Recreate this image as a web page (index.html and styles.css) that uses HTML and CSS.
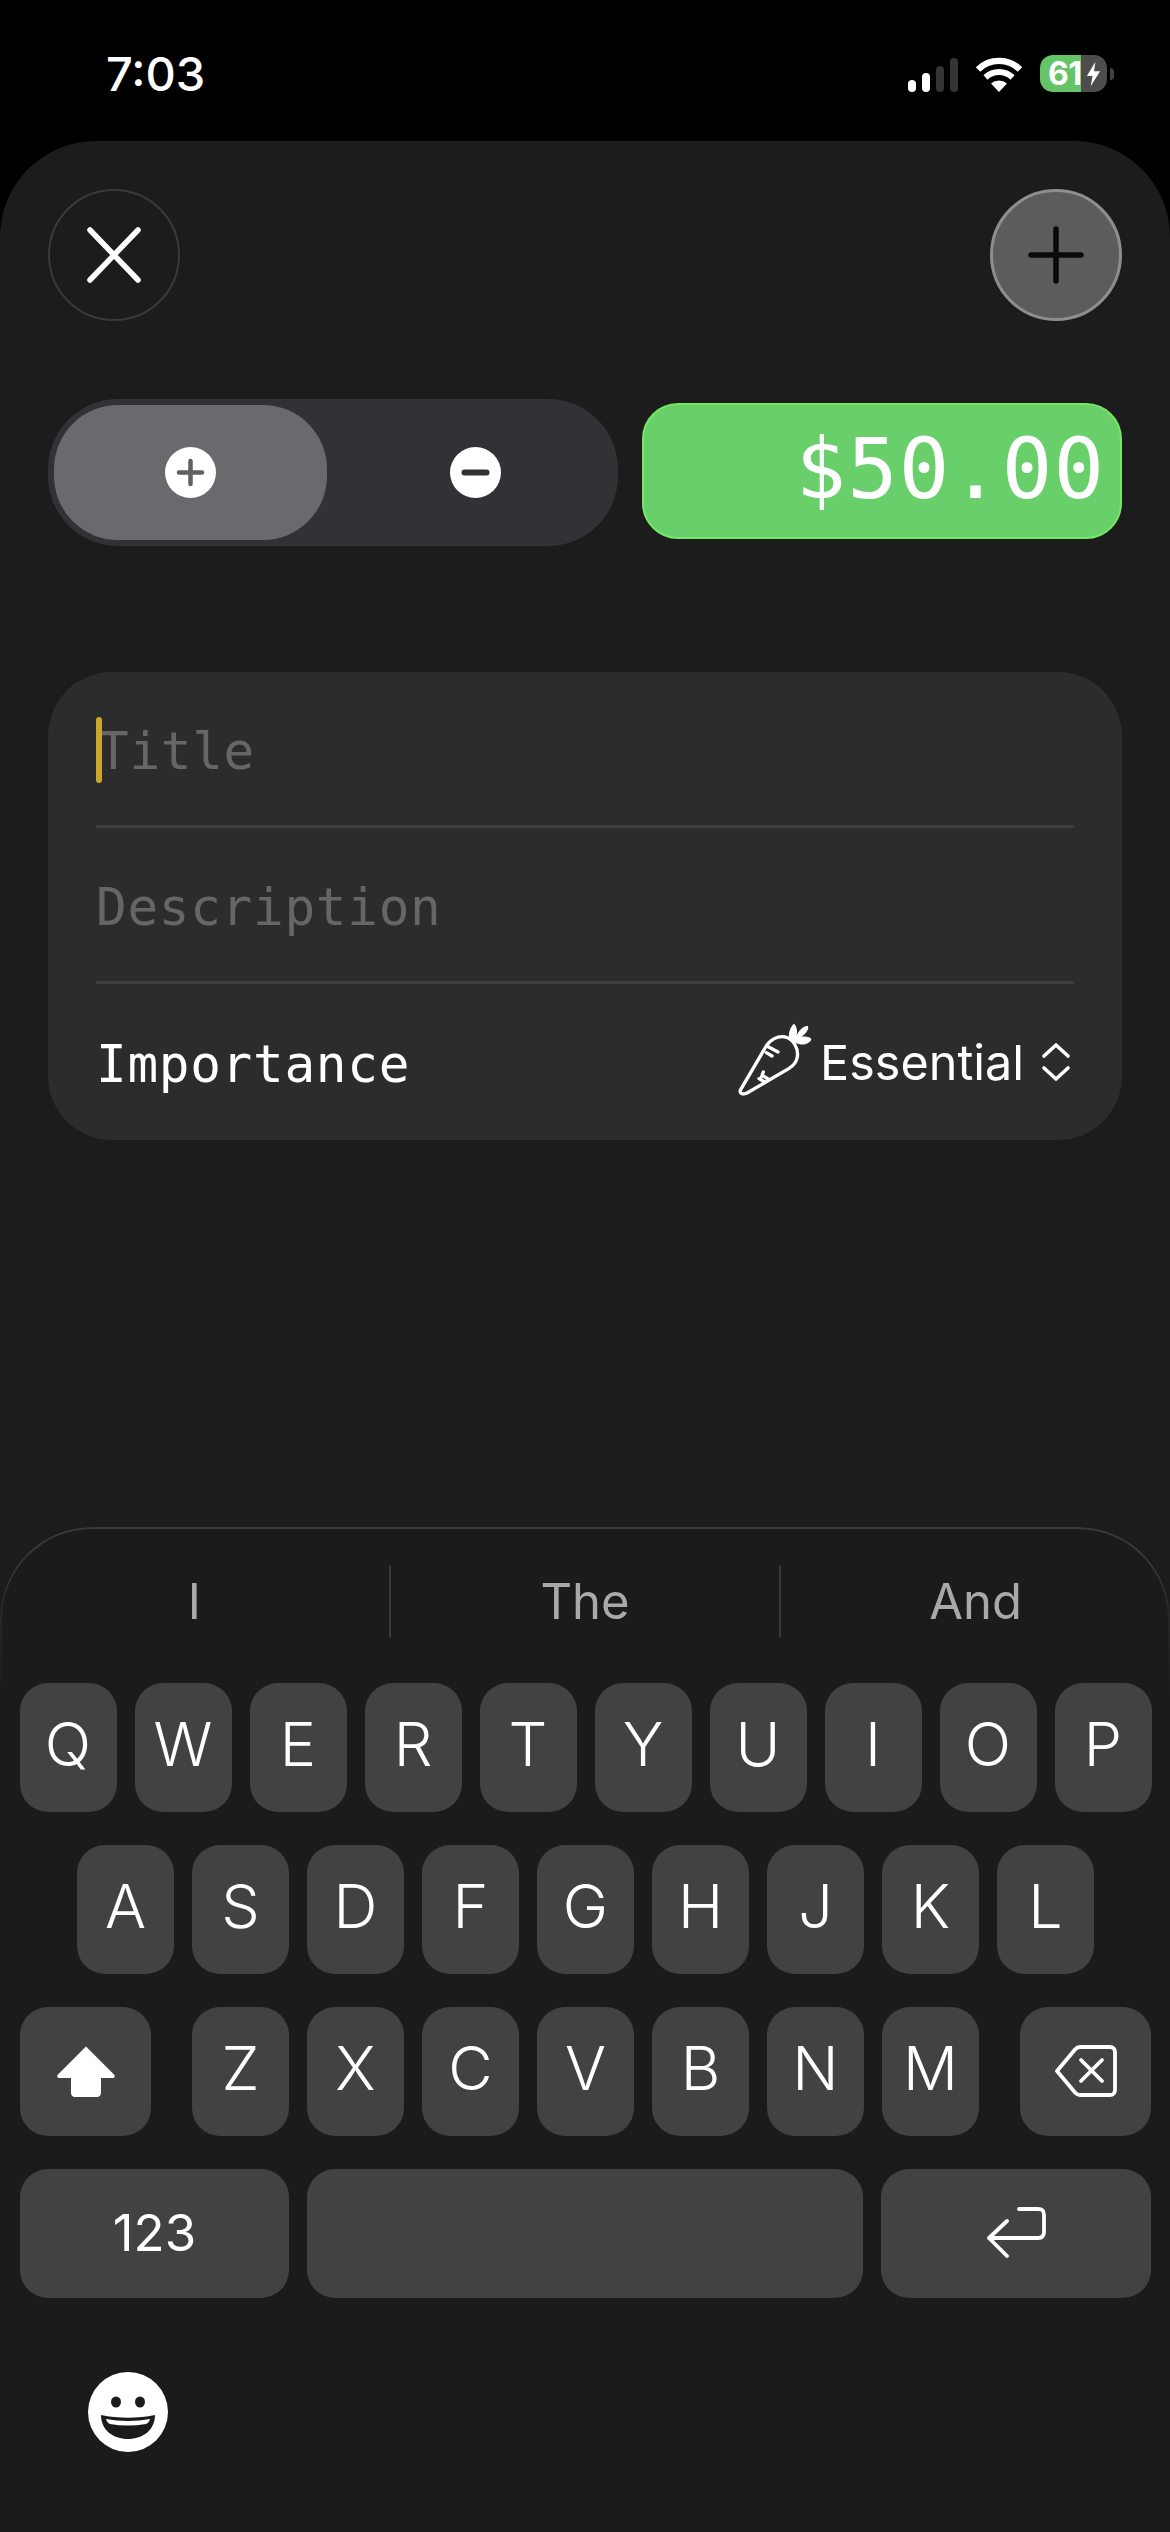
FILE: index.html
```html
<!DOCTYPE html>
<html lang="en">
<head>
<meta charset="utf-8">
<title>New transaction</title>
<link rel="stylesheet" href="styles.css">
</head>
<body>
<div class="phone">
  <header class="status">
    <span class="time">7:03</span>
    <div class="status-icons">
      <div class="signal"><i class="bar b1"></i><i class="bar b2"></i><i class="bar b3 off"></i><i class="bar b4 off"></i></div>
      <svg class="wifi" viewBox="0 0 48 36"><path d="M24 36 16 27.5a12 12 0 0 1 16 0Z" fill="#fff"/><path d="M10.5 21.5a19.5 19.5 0 0 1 27 0" fill="none" stroke="#fff" stroke-width="6"/><path d="M3 13.5a30 30 0 0 1 42 0" fill="none" stroke="#fff" stroke-width="6.4"/></svg>
      <div class="battery">
        <div class="battery-body">
          <span class="battery-num">61</span>
          <svg class="bolt" viewBox="0 0 16 26"><path d="M10 0 1 15h6l-2 11 10-16H8.500Z" fill="#fff"/></svg>
        </div>
        <i class="nub"></i>
      </div>
    </div>
  </header>

  <main class="sheet">
    <div class="form">
      <div class="top-actions">
        <button class="round close" aria-label="Close">
          <svg viewBox="0 0 60 60"><path d="M6 5 54 55M54 5 6 55" stroke="#fff" stroke-width="5.500" stroke-linecap="round"/></svg>
        </button>
        <button class="round add" aria-label="Add">
          <svg viewBox="0 0 60 60"><path d="M30 4V56M5 30H55" stroke="#0a0a0a" stroke-width="5.500" stroke-linecap="round"/></svg>
        </button>
      </div>

      <div class="amount-row">
        <div class="segment">
          <div class="seg-item active">
            <svg class="seg-icon" viewBox="0 0 51 51"><circle cx="25.500" cy="25.500" r="25.500" fill="#fff"/><path d="M25.500 14V37M14 25.500H37" stroke="#5f5f64" stroke-width="4.500" stroke-linecap="round"/></svg>
          </div>
          <div class="seg-item">
            <svg class="seg-icon" viewBox="0 0 51 51"><circle cx="25.500" cy="25.500" r="25.500" fill="#fff"/><path d="M14.500 25.500H36.500" stroke="#313136" stroke-width="6" stroke-linecap="round"/></svg>
          </div>
        </div>
        <div class="amount">$50.00</div>
      </div>

      <section class="card">
        <div class="field">
          <i class="caret"></i>
          <span class="mono placeholder title-ph">Title</span>
        </div>
        <div class="field">
          <span class="mono placeholder">Description</span>
        </div>
        <div class="field importance">
          <span class="mono">Importance</span>
          <div class="picker">
            <svg class="carrot" viewBox="120 80 225 225"><g fill="none" stroke="#fff" stroke-width="10" stroke-linecap="round" stroke-linejoin="round"><path d="M128 283 203 155C215 133 240 120 262 125 287 132 302 160 298 185 295 202 285 212 272 220L147 293C135 299 122 294 128 283Z"/><path d="M212 155 240 170M205 172 222 182M193 240 210 251M183 250 200 260M196 230 190 245"/></g><path d="M272 128C272 110 278 92 288 85 296 92 300 108 295 122 302 105 318 90 330 92 334 102 322 118 310 124 322 122 338 124 340 132 336 145 315 152 300 145 288 142 276 138 272 128Z" fill="#fff"/></svg>
            <span class="picker-label">Essential</span>
            <svg class="updown" viewBox="0 0 30 40"><path d="M3 14 15 3 27 14M3 26 15 37 27 26" fill="none" stroke="#fff" stroke-width="3.600" stroke-linecap="round" stroke-linejoin="round"/></svg>
          </div>
        </div>
      </section>
    </div>

    <section class="keyboard">
      <div class="suggestions">
        <span class="sug">I</span><span class="sug">The</span><span class="sug">And</span>
      </div>
      <div class="keys">
        <div class="row">
          <span class="key">Q</span><span class="key">W</span><span class="key">E</span><span class="key">R</span><span class="key">T</span><span class="key">Y</span><span class="key">U</span><span class="key">I</span><span class="key">O</span><span class="key">P</span>
        </div>
        <div class="row">
          <span class="key">A</span><span class="key">S</span><span class="key">D</span><span class="key">F</span><span class="key">G</span><span class="key">H</span><span class="key">J</span><span class="key">K</span><span class="key">L</span>
        </div>
        <div class="row row-split">
          <span class="key wide">
            <svg class="shift" viewBox="0 0 60 52"><path d="M30 1.500 58 29.500C59.500 31 58.500 33 57 33H45V48C45 50 43.500 52 41 52H19C16.500 52 15 50 15 48V33H3C1.500 33 .5 31 2 29.500Z" fill="#fff"/></svg>
          </span>
          <div class="group">
            <span class="key">Z</span><span class="key">X</span><span class="key">C</span><span class="key">V</span><span class="key">B</span><span class="key">N</span><span class="key">M</span>
          </div>
          <span class="key wide">
            <svg class="delete" viewBox="0 0 62 52"><path d="M2 26 20 4.500C21.500 2.800 23 2 25 2H55C58 2 60 4 60 7V45C60 48 58 50 55 50H25C23 50 21.500 49.200 20 47.500Z" fill="none" stroke="#fff" stroke-width="3.800" stroke-linejoin="round"/><path d="M26 15 47 36M47 15 26 36" stroke="#fff" stroke-width="3.800" stroke-linecap="round"/></svg>
          </span>
        </div>
        <div class="row">
          <span class="key num">123</span>
          <span class="key space"></span>
          <span class="key ret">
            <svg class="return" viewBox="0 0 60 52"><path d="M33 2H52C56.500 2 58 4 58 8V25C58 29 56 31 52 31H3M21 14 3 31 21 49" fill="none" stroke="#fff" stroke-width="3.800" stroke-linecap="round" stroke-linejoin="round"/></svg>
          </span>
        </div>
      </div>
      <svg class="emoji" viewBox="0 0 80 80"><circle cx="40" cy="40" r="40" fill="#fff"/><ellipse cx="28" cy="30" rx="5" ry="5.500" fill="#1b1b1b"/><ellipse cx="52" cy="30" rx="5" ry="5.500" fill="#1b1b1b"/><path d="M13 43C30 46.500 50 46.500 67 43 67 58 55 67 40 67 25 67 13 58 13 43Z" fill="#1b1b1b"/><path d="M18 47C32 49.500 48 49.500 62 47 61 50 60 51 58 52 46 54 34 54 22 52 20 51 19 50 18 47Z" fill="#fff"/></svg>
    </section>
  </main>
</div>
</body>
</html>
```
FILE: styles.css
```css
* { box-sizing: border-box; }
html, body { margin: 0; padding: 0; background: #000; }
.phone {
  width: 1170px;
  height: 2532px;
  overflow: hidden;
  display: flex;
  flex-direction: column;
  background: #000;
  color: #fff;
  font-family: Inter, "Liberation Sans", sans-serif;
}

/* status bar */
.status {
  flex: 0 0 141px;
  display: flex;
  justify-content: space-between;
  align-items: flex-start;
  padding: 0 56px 0 106px;
}
.time {
  font-size: 47px;
  font-weight: 500;
  line-height: 56px;
  margin-top: 46px;
}
.status-icons {
  display: flex;
  align-items: flex-end;
  margin-top: 55px;
  gap: 17px;
}
.signal { display: flex; align-items: flex-end; gap: 6px; height: 36px; }
.bar { display: block; width: 8px; border-radius: 4px; background: #fff; }
.b1 { height: 12px; }
.b2 { height: 19px; }
.b3 { height: 26px; }
.b4 { height: 34px; }
.off { background: #343434; }
.wifi { width: 48px; height: 36px; display: block; }
.battery { display: flex; align-items: center; gap: 3px; }
.battery-body {
  width: 67px;
  height: 37px;
  border-radius: 13px;
  background: linear-gradient(90deg, #65c466 0 41px, #4d4d4d 41px);
  display: flex;
  align-items: center;
  padding-left: 8px;
}
.battery-num { font-size: 32px; font-weight: 700; line-height: 37px; letter-spacing: -.5px; width: 38px; }
.bolt { width: 15px; height: 26px; display: block; }
.nub { display: block; width: 4px; height: 12px; border-radius: 0 6px 6px 0; background: #444; }

/* sheet */
.sheet {
  flex: 1;
  display: flex;
  flex-direction: column;
  background: #1c1c1c;
  border-radius: 96px 96px 0 0;
}
.form { flex: 0 0 1386px; padding: 48px 48px 0; }
.top-actions { display: flex; justify-content: space-between; }
.round {
  width: 132px;
  height: 132px;
  border-radius: 50%;
  padding: 0;
  display: flex;
  align-items: center;
  justify-content: center;
  background: transparent;
}
.round svg { width: 60px; height: 60px; display: block; }
.close { border: 2px solid #3a3a3a; }
.add { border: 3px solid #8e8e8e; background: #5c5c5c; }

.amount-row {
  margin-top: 78px;
  display: flex;
  align-items: flex-start;
  gap: 24px;
}
.segment {
  flex: 0 0 570px;
  height: 147px;
  padding: 6px;
  border-radius: 70px;
  background: #313136;
  display: flex;
}
.seg-item {
  flex: 0 0 273px;
  display: flex;
  align-items: center;
  justify-content: center;
  border-radius: 64px;
}
.seg-item + .seg-item { flex: 1; padding-left: 12px; }
.active { background: #69696e; }
.seg-icon { width: 51px; height: 51px; display: block; }
.amount {
  flex: 1;
  height: 136px;
  margin-top: 4px;
  border-radius: 36px;
  background: #69cf6b;
  border: 2px solid #74e765;
  font-family: "DejaVu Sans Mono", monospace;
  font-size: 84px;
  line-height: 128px;
  letter-spacing: 1px;
  text-align: right;
  padding-right: 15px;
}

/* form card */
.card {
  margin-top: 126px;
  height: 468px;
  border-radius: 64px;
  background: #2c2c2c;
  padding: 0 48px;
}
.field {
  height: 156px;
  display: flex;
  align-items: center;
  position: relative;
  border-bottom: 3px solid #3e3e3e;
}
.importance { border-bottom: 0; justify-content: space-between; }
.mono {
  font-family: "DejaVu Sans Mono", monospace;
  font-size: 51px;
  line-height: 60px;
  letter-spacing: .7px;
  margin-top: 6px;
}
.placeholder { color: #666; }
.title-ph { margin-left: 2px; }
.caret {
  position: absolute;
  left: 0;
  top: 45px;
  width: 6px;
  height: 66px;
  border-radius: 3px;
  background: #c9a82c;
}
.picker { display: flex; align-items: center; }
.carrot { width: 75px; height: 75px; display: block; margin: -6px 7px 0 0; }
.picker-label { font-size: 48.500px; line-height: 60px; margin-top: 2px; }
.updown { width: 30px; height: 40px; display: block; margin-left: 17px; margin-right: 3px; }

/* keyboard */
.keyboard {
  flex: 1;
  position: relative;
  background: #1b1b1b;
  border-radius: 92px 92px 0 0;
  padding-top: 39px;
}
.keyboard::before {
  content: "";
  position: absolute;
  inset: 0 0 auto 0;
  height: 170px;
  border: 2px solid #3a3a3d;
  border-bottom: 0;
  border-radius: 92px 92px 0 0;
  -webkit-mask-image: linear-gradient(#000 15%, rgba(0,0,0,.35) 55%, transparent);
  mask-image: linear-gradient(#000 15%, rgba(0,0,0,.35) 55%, transparent);
}
.suggestions { display: flex; height: 71px; }
.sug {
  flex: 1;
  display: flex;
  align-items: center;
  justify-content: center;
  font-size: 49px;
  color: #a9a9a9;
  border-right: 2px solid #3a3a3a;
}
.sug:last-child { border-right: 0; }
.keys {
  margin-top: 46px;
  display: flex;
  flex-direction: column;
  gap: 33.500px;
  padding: 0 19px 0 20px;
}
.row { display: flex; justify-content: center; gap: 18px; }
.row-split { justify-content: space-between; }
.group { display: flex; gap: 18px; }
.key {
  flex: 0 0 97px;
  width: 97px;
  height: 128.500px;
  border-radius: 28px;
  background: #424242;
  display: flex;
  align-items: center;
  justify-content: center;
  font-size: 61px;
  font-weight: 350;
  padding-bottom: 6px;
}
.wide { flex: 0 0 131px; width: 131px; padding-bottom: 0; }
.num { flex: 0 0 269px; width: 269px; font-size: 51px; font-weight: 400; padding-bottom: 2px; }
.space { flex: 1; }
.ret { flex: 0 0 270px; width: 270px; padding-bottom: 0; }
.shift { width: 60px; height: 52px; display: block; }
.delete { width: 62px; height: 52px; display: block; }
.return { width: 60px; height: 52px; display: block; }
.emoji { width: 80px; height: 80px; display: block; margin: 74px 0 0 88px; }
```
